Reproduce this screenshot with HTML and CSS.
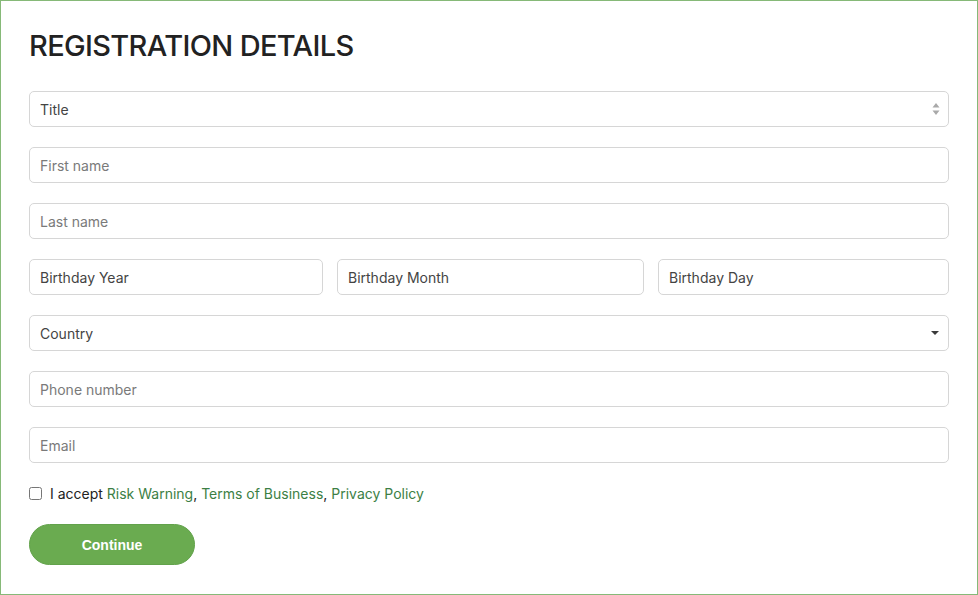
FILE: index.html
```html
<!DOCTYPE html>
<html lang="en">
<head>
<meta charset="utf-8">
<title>Registration Details</title>
<link rel="stylesheet" href="styles.css">
</head>
<body>
<div class="page">
  <h1 class="heading">REGISTRATION DETAILS</h1>
  <form class="form">
    <div class="field select">
      <span class="value">Title</span>
      <svg class="updown" width="8" height="14" viewBox="0 0 8 14"><path d="M4 1 L7.5 5.5 H0.5 Z M4 13 L7.5 8.5 H0.5 Z" fill="#a9a9a9"/></svg>
    </div>
    <input class="field" type="text" placeholder="First name">
    <input class="field" type="text" placeholder="Last name">
    <div class="birthday">
      <div class="field select"><span class="value">Birthday Year</span></div>
      <div class="field select"><span class="value">Birthday Month</span></div>
      <div class="field select"><span class="value">Birthday Day</span></div>
    </div>
    <div class="field select">
      <span class="value">Country</span>
      <svg class="caret" width="8" height="4" viewBox="0 0 8 4"><path d="M0 0 H8 L4 4 Z" fill="#3a3a3a"/></svg>
    </div>
    <input class="field" type="text" placeholder="Phone number">
    <input class="field" type="text" placeholder="Email">
    <label class="accept">
      <input class="check" type="checkbox">
      <span>I accept <a href="#" class="link">Risk Warning</a>, <a href="#" class="link">Terms of Business</a>, <a href="#" class="link">Privacy Policy</a></span>
    </label>
    <button type="button" class="btn">Continue</button>
  </form>
</div>
</body>
</html>
```
FILE: styles.css
```css
* { box-sizing: border-box; }
html, body { margin: 0; padding: 0; background: #fff; }
body { font-family: Inter, "Noto Sans", sans-serif; color: #222; }
.page {
  width: 978px;
  height: 595px;
  border: 1px solid #86b978;
  padding: 27px 29px 0 28px;
}
.heading {
  margin: 0;
  font-size: 29px;
  line-height: 36px;
  font-weight: 500;
  color: #222;
  letter-spacing: -0.65px;
}
.form {
  margin-top: 27px;
  display: flex;
  flex-direction: column;
  gap: 20px;
}
.field {
  display: flex;
  align-items: center;
  width: 920px;
  height: 36px;
  border: 1px solid #d6d6d6;
  border-radius: 5px;
  padding: 0 10px;
  font-family: Inter, "Noto Sans", sans-serif;
  font-size: 14px;
  color: #444;
  background: #fff;
  outline: none;
}
.field::placeholder { color: #7a7a7a; }
.select { justify-content: space-between; }
.value { color: #444; }
.updown { margin-right: -2px; }
.caret { margin-right: -1px; }
.birthday {
  display: grid;
  grid-template-columns: 294px 307px 291px;
  column-gap: 14px;
  width: 920px;
}
.birthday .field { width: auto; }
.accept {
  display: flex;
  align-items: center;
  gap: 8px;
  height: 20px;
  margin-top: 0;
  font-size: 14px;
  color: #222;
}
.check {
  margin: 0;
  width: 13px;
  height: 13px;
}
.link { color: #3c7f45; text-decoration: none; }
.btn {
  margin-top: 1px;
  width: 166px;
  height: 41px;
  border: 1px solid #62a24b;
  border-radius: 21px;
  background: #6aab50;
  color: #fff;
  font-family: "Liberation Sans", Arial, sans-serif;
  font-weight: bold;
  font-size: 14px;
  cursor: pointer;
}
```
